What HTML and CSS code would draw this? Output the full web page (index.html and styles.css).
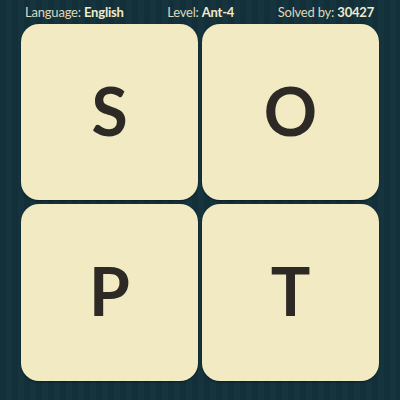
FILE: index.html
```html
<!DOCTYPE html>
<html>
<head>
<meta charset="utf-8">
<link rel="stylesheet" href="styles.css">
</head>
<body>
<div class="page">
  <div class="header">
    <span class="item">Language: <b>English</b></span>
    <span class="item">Level: <b>Ant-4</b></span>
    <span class="item">Solved by: <b>30427</b></span>
  </div>
  <div class="grid">
    <div class="tile">S</div>
    <div class="tile">O</div>
    <div class="tile">P</div>
    <div class="tile">T</div>
  </div>
</div>
</body>
</html>
```
FILE: styles.css
```css
html, body {
  margin: 0;
  padding: 0;
}
body {
  width: 400px;
  height: 400px;
  background-color: #13303a;
  background-image: repeating-linear-gradient(90deg, #13303a 0px, #13303a 6px, #15343e 6px, #15343e 12px);
  font-family: "Lato", "Open Sans", sans-serif;
}
.page {
  width: 400px;
  height: 400px;
  display: flex;
  flex-direction: column;
}
.header {
  height: 24px;
  display: flex;
  justify-content: space-between;
  align-items: center;
  padding: 0 26px 0 25px;
  color: #ddd8b8;
  font-size: 13px;
  letter-spacing: -0.2px;
  box-sizing: border-box;
}
.header b {
  font-weight: 700;
  color: #f0ebcb;
}
.grid {
  display: grid;
  grid-template-columns: 177px 177px;
  grid-template-rows: 176px 177px;
  gap: 4px;
  padding-left: 21px;
}
.tile {
  background: #f1eac3;
  border-radius: 18px;
  display: flex;
  align-items: center;
  justify-content: center;
  color: #2d2a25;
  font-size: 66px;
  font-weight: 700;
  padding-bottom: 4px;
  box-sizing: border-box;
  box-shadow: 0 1px 2px rgba(0,0,0,0.4);
}
```
